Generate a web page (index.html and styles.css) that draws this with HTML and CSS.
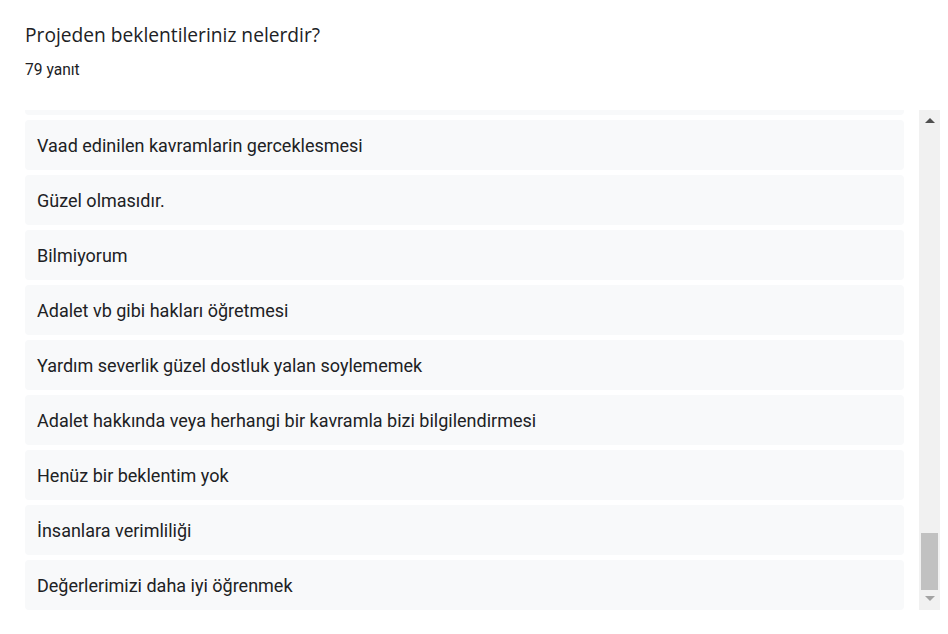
FILE: index.html
```html
<!DOCTYPE html>
<html lang="tr">
<head>
<meta charset="utf-8">
<link rel="stylesheet" href="styles.css">
</head>
<body>
<div class="page">
  <div class="header">
    <div class="title">Projeden beklentileriniz nelerdir?</div>
    <div class="count">79 yanıt</div>
  </div>
  <div class="panel">
    <div class="viewport">
      <div class="list">
        <div class="row"></div>
        <div class="row">Vaad edinilen kavramlarin gerceklesmesi</div>
        <div class="row">Güzel olmasıdır.</div>
        <div class="row">Bilmiyorum</div>
        <div class="row">Adalet vb gibi hakları öğretmesi</div>
        <div class="row">Yardım severlik güzel dostluk yalan soylememek</div>
        <div class="row">Adalet hakkında veya herhangi bir kavramla bizi bilgilendirmesi</div>
        <div class="row">Henüz bir beklentim yok</div>
        <div class="row">İnsanlara verimliliği</div>
        <div class="row">Değerlerimizi daha iyi öğrenmek</div>
      </div>
    </div>
    <div class="scrollbar">
      <div class="arrow up"></div>
      <div class="track"><div class="thumb"></div></div>
      <div class="arrow down"></div>
    </div>
  </div>
</div>
</body>
</html>
```
FILE: styles.css
```css
* { box-sizing: border-box; }
html, body { margin: 0; padding: 0; background: #fff; }
body { font-family: Roboto, "Noto Sans", sans-serif; color: #202124; }
.page { padding: 0 8px 0 25px; width: 948px; height: 634px; }
.header { padding-top: 22px; height: 110px; }
.title { font-family: "Open Sans", Roboto, sans-serif; font-size: 19.2px; line-height: 26px; color: #202124; letter-spacing: 0; }
.count { font-size: 15.6px; line-height: 20px; margin-top: 12px; color: #202124; }
.panel { display: flex; height: 500px; }
.viewport { width: 879px; height: 500px; overflow: hidden; }
.list { display: flex; flex-direction: column; gap: 5px; margin-top: -45px; }
.row { height: 50px; flex: none; background: #f8f9fa; border-radius: 4px; padding: 0 12px; display: flex; align-items: center; font-size: 18px; color: #202124; }
.scrollbar { margin-left: 15px; width: 21px; height: 500px; background: #f1f1f1; display: flex; flex-direction: column; align-items: center; }
.arrow { width: 0; height: 0; border-left: 5px solid transparent; border-right: 5px solid transparent; flex: none; }
.arrow.up { border-bottom: 5px solid #505050; margin-top: 8px; margin-bottom: 7px; }
.arrow.down { border-top: 5px solid #a3a3a3; margin-top: 6px; margin-bottom: 9px; }
.track { flex: 1; width: 100%; display: flex; flex-direction: column; justify-content: flex-end; padding: 0 2px; }
.thumb { height: 57px; background: #c1c1c1; }
```
